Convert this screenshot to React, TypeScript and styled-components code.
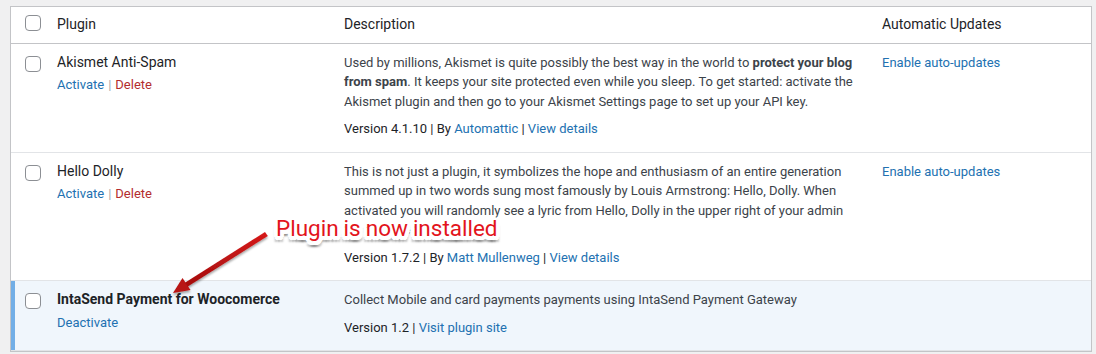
import React from "react";
import styled, { createGlobalStyle } from "styled-components";

const Global = createGlobalStyle`
  html, body { margin: 0; padding: 0; background: #f0f0f1; }
  body {
    font-family: Roboto, "Liberation Sans", Arial, sans-serif;
    font-size: 13px;
    line-height: 19.5px;
    color: #3c434a;
    overflow: hidden;
  }
  * { box-sizing: border-box; }
`;

const Page = styled.div`
  position: relative;
  padding: 6px 0 0 10px;
  width: 1096px;
  height: 354px;
`;

const Table = styled.table`
  width: 1082px;
  table-layout: fixed;
  border-collapse: separate;
  border-spacing: 0;
  background: #fff;
  border: 1px solid #c3c4c7;
`;

const HeadCell = styled.th<{ $check?: boolean }>`
  text-align: left;
  font-weight: 400;
  font-size: 14px;
  line-height: 19.6px;
  color: #1d2327;
  padding: ${(p) => (p.$check ? "8px 0 0 14px" : "8px 10px")};
  height: 35px;
  vertical-align: ${(p) => (p.$check ? "top" : "middle")};
  border-bottom: 1px solid #c3c4c7;
`;

const Row = styled.tr<{ $active?: boolean }>`
  background: ${(p) => (p.$active ? "#f0f6fc" : "#fff")};
`;

const CheckCell = styled.th<{ $active?: boolean }>`
  padding: 12px 0 0 14px;
  vertical-align: top;
  text-align: left;
  border-bottom: 1px solid #e2e4e7;
  box-shadow: ${(p) => (p.$active ? "inset 4px 0 0 #72aee6" : "none")};
`;

const Cell = styled.td`
  padding: 9px 10px 13px;
  vertical-align: top;
  border-bottom: 1px solid #e2e4e7;
`;

const Box = styled.span`
  display: block;
  width: 16px;
  height: 16px;
  border: 1px solid #8c8f94;
  border-radius: 4px;
  background: #fff;
`;

const Title = styled.strong<{ $active?: boolean }>`
  display: block;
  font-size: 14px;
  line-height: 19.5px;
  font-weight: ${(p) => (p.$active ? 700 : 400)};
  color: #1d2327;
`;

const Actions = styled.div`
  padding-top: 3px;
  font-size: 13px;
  color: #a7aaad;
`;

const Link = styled.a<{ $danger?: boolean }>`
  color: ${(p) => (p.$danger ? "#b32d2e" : "#2271b1")};
  text-decoration: none;
`;

const Sep = styled.span`
  margin: 0 4px;
`;

const Desc = styled.p`
  margin: 0 0 8px;
  color: #3c434a;
`;

const Meta = styled.div`
  color: #1d2327;
`;

const Overlay = styled.div`
  position: absolute;
  left: 0;
  top: 0;
  width: 1096px;
  height: 354px;
  pointer-events: none;
`;

const Label = styled.div`
  position: absolute;
  left: 276px;
  top: 215px;
  display: flex;
  gap: 5px;
  font-family: Roboto, "Liberation Sans", Arial, sans-serif;
  font-size: 22.5px;
  line-height: 26px;
  color: #e3141c;
  white-space: nowrap;
`;

const Word = styled.span`
  text-shadow:
    3px 0 0 #fff, -3px 0 0 #fff, 0 3px 0 #fff, 0 -3px 0 #fff,
    3px 3px 0 #fff, -3px -3px 0 #fff, 3px -3px 0 #fff, -3px 3px 0 #fff,
    4px 1px 0 #fff, -4px 1px 0 #fff, 1px 4px 0 #fff, -1px 4px 0 #fff,
    2px 4px 0 #fff, -2px 4px 0 #fff, 4px -2px 0 #fff, -4px -2px 0 #fff,
    0 6px 2px rgba(0,0,0,0.35), 3px 6px 2px rgba(0,0,0,0.25), -3px 6px 2px rgba(0,0,0,0.25);
`;

const ArrowSvg = styled.svg`
  position: absolute;
  left: 0;
  top: 0;
`;

const Sep2 = () => <span> | </span>;

export default function App() {
  return (
    <>
      <Global />
      <Page>
        <Table>
          <colgroup>
            <col style={{ width: 36 }} />
            <col style={{ width: 287 }} />
            <col style={{ width: 538 }} />
            <col style={{ width: 219 }} />
          </colgroup>
          <thead>
            <tr>
              <HeadCell $check>
                <Box />
              </HeadCell>
              <HeadCell>Plugin</HeadCell>
              <HeadCell>Description</HeadCell>
              <HeadCell>Automatic Updates</HeadCell>
            </tr>
          </thead>
          <tbody>
            <Row>
              <CheckCell>
                <Box />
              </CheckCell>
              <Cell>
                <Title>Akismet Anti-Spam</Title>
                <Actions>
                  <Link>Activate</Link>
                  <Sep>|</Sep>
                  <Link $danger>Delete</Link>
                </Actions>
              </Cell>
              <Cell>
                <Desc>
                  Used by millions, Akismet is quite possibly the best way in the world to{" "}
                  <strong>protect your blog from spam</strong>. It keeps your site protected even while you
                  sleep. To get started: activate the Akismet plugin and then go to your Akismet Settings
                  page to set up your API key.
                </Desc>
                <Meta>
                  Version 4.1.10 | By <Link>Automattic</Link>
                  <Sep2 />
                  <Link>View details</Link>
                </Meta>
              </Cell>
              <Cell>
                <Link>Enable auto-updates</Link>
              </Cell>
            </Row>
            <Row>
              <CheckCell>
                <Box />
              </CheckCell>
              <Cell>
                <Title>Hello Dolly</Title>
                <Actions>
                  <Link>Activate</Link>
                  <Sep>|</Sep>
                  <Link $danger>Delete</Link>
                </Actions>
              </Cell>
              <Cell>
                <Desc>
                  This is not just a plugin, it symbolizes the hope and enthusiasm of an entire generation
                  summed up in two words sung most famously by Louis Armstrong: Hello, Dolly. When
                  activated you will randomly see a lyric from Hello, Dolly in the upper right of your admin
                  screen on every page.
                </Desc>
                <Meta>
                  Version 1.7.2 | By <Link>Matt Mullenweg</Link>
                  <Sep2 />
                  <Link>View details</Link>
                </Meta>
              </Cell>
              <Cell>
                <Link>Enable auto-updates</Link>
              </Cell>
            </Row>
            <Row $active>
              <CheckCell $active>
                <Box />
              </CheckCell>
              <Cell>
                <Title $active>IntaSend Payment for Woocomerce</Title>
                <Actions>
                  <Link>Deactivate</Link>
                </Actions>
              </Cell>
              <Cell>
                <Desc>Collect Mobile and card payments payments using IntaSend Payment Gateway</Desc>
                <Meta>
                  Version 1.2 | <Link>Visit plugin site</Link>
                </Meta>
              </Cell>
              <Cell />
            </Row>
          </tbody>
        </Table>
        <Overlay>
          <ArrowSvg width="1096" height="354" viewBox="0 0 1096 354">
            <defs>
              <linearGradient id="arr" x1="0" y1="0" x2="0" y2="1">
                <stop offset="0" stopColor="#d61a1a" />
                <stop offset="1" stopColor="#a30d0d" />
              </linearGradient>
              <filter id="sh" x="-20%" y="-20%" width="140%" height="140%">
                <feDropShadow dx="0" dy="2" stdDeviation="1.2" floodColor="#000" floodOpacity="0.35" />
              </filter>
            </defs>
            <g filter="url(#sh)">
              <path d="M265 232 L267.8 236 L187 287 L184.5 283 Z" fill="url(#arr)" />
              <path d="M173 293 L182.5 278 L190.5 290 Z" fill="#b81212" />
            </g>
          </ArrowSvg>
          <Label>
            <Word>Plugin</Word>
            <Word>is</Word>
            <Word>now</Word>
            <Word>installed</Word>
          </Label>
        </Overlay>
      </Page>
    </>
  );
}
